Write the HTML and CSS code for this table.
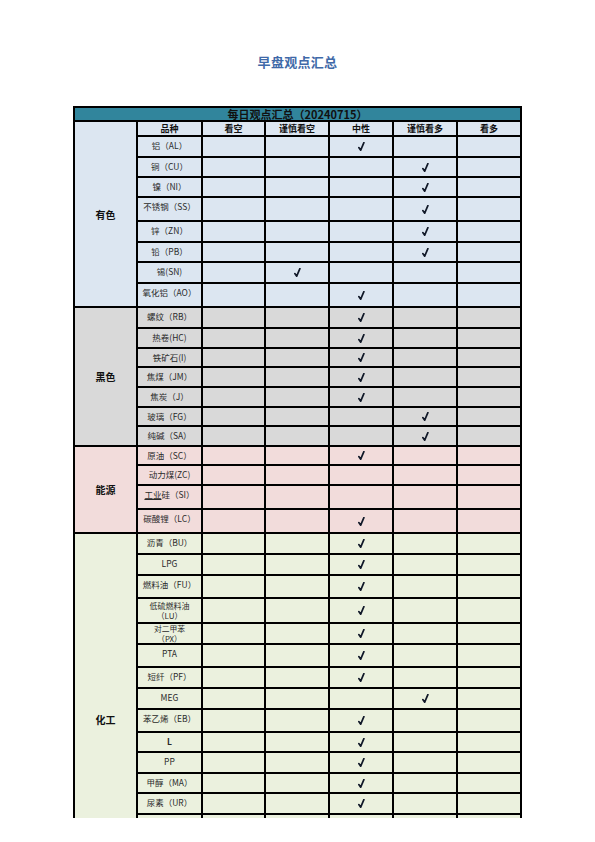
FILE: index.html
```html
<!DOCTYPE html>
<html lang="zh-CN">
<head>
<meta charset="utf-8">
<title>早盘观点汇总</title>
<link rel="stylesheet" href="styles.css">
</head>
<body>
<div class="page">
  <h1 class="title">早盘观点汇总</h1>
  <div class="clip">
    <div class="sheet">
      <div class="banner">每日观点汇总（20240715）</div>

      <div class="cat ys span-ys">有色</div>
      <div class="row ys head">
        <div>品种</div><div>看空</div><div>谨慎看空</div><div>中性</div><div>谨慎看多</div><div>看多</div>
      </div>
      <div class="row ys"><div class="name">铝（AL）</div><div></div><div></div><div><svg class="chk" viewBox="0 0 7 9"><path d="M0.8 5.6 L2.7 8.2 L5.9 0.6"/></svg></div><div></div><div></div></div>
      <div class="row ys"><div class="name">铜（CU）</div><div></div><div></div><div></div><div><svg class="chk" viewBox="0 0 7 9"><path d="M0.8 5.6 L2.7 8.2 L5.9 0.6"/></svg></div><div></div></div>
      <div class="row ys"><div class="name">镍（NI）</div><div></div><div></div><div></div><div><svg class="chk" viewBox="0 0 7 9"><path d="M0.8 5.6 L2.7 8.2 L5.9 0.6"/></svg></div><div></div></div>
      <div class="row ys"><div class="name">不锈钢（SS）</div><div></div><div></div><div></div><div><svg class="chk" viewBox="0 0 7 9"><path d="M0.8 5.6 L2.7 8.2 L5.9 0.6"/></svg></div><div></div></div>
      <div class="row ys"><div class="name">锌（ZN）</div><div></div><div></div><div></div><div><svg class="chk" viewBox="0 0 7 9"><path d="M0.8 5.6 L2.7 8.2 L5.9 0.6"/></svg></div><div></div></div>
      <div class="row ys"><div class="name">铅（PB）</div><div></div><div></div><div></div><div><svg class="chk" viewBox="0 0 7 9"><path d="M0.8 5.6 L2.7 8.2 L5.9 0.6"/></svg></div><div></div></div>
      <div class="row ys"><div class="name">锡(SN)</div><div></div><div><svg class="chk" viewBox="0 0 7 9"><path d="M0.8 5.6 L2.7 8.2 L5.9 0.6"/></svg></div><div></div><div></div><div></div></div>
      <div class="row ys"><div class="name">氧化铝（AO）</div><div></div><div></div><div><svg class="chk" viewBox="0 0 7 9"><path d="M0.8 5.6 L2.7 8.2 L5.9 0.6"/></svg></div><div></div><div></div></div>

      <div class="cat hs span-hs">黑色</div>
      <div class="row hs"><div class="name">螺纹（RB）</div><div></div><div></div><div><svg class="chk" viewBox="0 0 7 9"><path d="M0.8 5.6 L2.7 8.2 L5.9 0.6"/></svg></div><div></div><div></div></div>
      <div class="row hs"><div class="name">热卷(HC)</div><div></div><div></div><div><svg class="chk" viewBox="0 0 7 9"><path d="M0.8 5.6 L2.7 8.2 L5.9 0.6"/></svg></div><div></div><div></div></div>
      <div class="row hs"><div class="name">铁矿石(I)</div><div></div><div></div><div><svg class="chk" viewBox="0 0 7 9"><path d="M0.8 5.6 L2.7 8.2 L5.9 0.6"/></svg></div><div></div><div></div></div>
      <div class="row hs"><div class="name">焦煤（JM）</div><div></div><div></div><div><svg class="chk" viewBox="0 0 7 9"><path d="M0.8 5.6 L2.7 8.2 L5.9 0.6"/></svg></div><div></div><div></div></div>
      <div class="row hs"><div class="name">焦炭（J）</div><div></div><div></div><div><svg class="chk" viewBox="0 0 7 9"><path d="M0.8 5.6 L2.7 8.2 L5.9 0.6"/></svg></div><div></div><div></div></div>
      <div class="row hs"><div class="name">玻璃（FG）</div><div></div><div></div><div></div><div><svg class="chk" viewBox="0 0 7 9"><path d="M0.8 5.6 L2.7 8.2 L5.9 0.6"/></svg></div><div></div></div>
      <div class="row hs"><div class="name">纯碱（SA）</div><div></div><div></div><div></div><div><svg class="chk" viewBox="0 0 7 9"><path d="M0.8 5.6 L2.7 8.2 L5.9 0.6"/></svg></div><div></div></div>

      <div class="cat ny span-ny">能源</div>
      <div class="row ny"><div class="name">原油（SC）</div><div></div><div></div><div><svg class="chk" viewBox="0 0 7 9"><path d="M0.8 5.6 L2.7 8.2 L5.9 0.6"/></svg></div><div></div><div></div></div>
      <div class="row ny"><div class="name">动力煤(ZC)</div><div></div><div></div><div></div><div></div><div></div></div>
      <div class="row ny"><div class="name"><span class="ul">工业</span>硅（SI）</div><div></div><div></div><div></div><div></div><div></div></div>
      <div class="row ny"><div class="name">碳酸锂（LC）</div><div></div><div></div><div><svg class="chk" viewBox="0 0 7 9"><path d="M0.8 5.6 L2.7 8.2 L5.9 0.6"/></svg></div><div></div><div></div></div>

      <div class="cat hg span-hg">化工</div>
      <div class="row hg"><div class="name">沥青（BU）</div><div></div><div></div><div><svg class="chk" viewBox="0 0 7 9"><path d="M0.8 5.6 L2.7 8.2 L5.9 0.6"/></svg></div><div></div><div></div></div>
      <div class="row hg"><div class="name">LPG</div><div></div><div></div><div><svg class="chk" viewBox="0 0 7 9"><path d="M0.8 5.6 L2.7 8.2 L5.9 0.6"/></svg></div><div></div><div></div></div>
      <div class="row hg"><div class="name">燃料油（FU）</div><div></div><div></div><div><svg class="chk" viewBox="0 0 7 9"><path d="M0.8 5.6 L2.7 8.2 L5.9 0.6"/></svg></div><div></div><div></div></div>
      <div class="row hg"><div class="name two">低硫燃料油<br>（LU）</div><div></div><div></div><div><svg class="chk" viewBox="0 0 7 9"><path d="M0.8 5.6 L2.7 8.2 L5.9 0.6"/></svg></div><div></div><div></div></div>
      <div class="row hg"><div class="name two tight">对二甲苯<br>（PX）</div><div></div><div></div><div><svg class="chk" viewBox="0 0 7 9"><path d="M0.8 5.6 L2.7 8.2 L5.9 0.6"/></svg></div><div></div><div></div></div>
      <div class="row hg"><div class="name">PTA</div><div></div><div></div><div><svg class="chk" viewBox="0 0 7 9"><path d="M0.8 5.6 L2.7 8.2 L5.9 0.6"/></svg></div><div></div><div></div></div>
      <div class="row hg"><div class="name">短纤（PF）</div><div></div><div></div><div><svg class="chk" viewBox="0 0 7 9"><path d="M0.8 5.6 L2.7 8.2 L5.9 0.6"/></svg></div><div></div><div></div></div>
      <div class="row hg"><div class="name">MEG</div><div></div><div></div><div></div><div><svg class="chk" viewBox="0 0 7 9"><path d="M0.8 5.6 L2.7 8.2 L5.9 0.6"/></svg></div><div></div></div>
      <div class="row hg"><div class="name">苯乙烯（EB）</div><div></div><div></div><div><svg class="chk" viewBox="0 0 7 9"><path d="M0.8 5.6 L2.7 8.2 L5.9 0.6"/></svg></div><div></div><div></div></div>
      <div class="row hg"><div class="name bold">L</div><div></div><div></div><div><svg class="chk" viewBox="0 0 7 9"><path d="M0.8 5.6 L2.7 8.2 L5.9 0.6"/></svg></div><div></div><div></div></div>
      <div class="row hg"><div class="name">PP</div><div></div><div></div><div><svg class="chk" viewBox="0 0 7 9"><path d="M0.8 5.6 L2.7 8.2 L5.9 0.6"/></svg></div><div></div><div></div></div>
      <div class="row hg"><div class="name">甲醇（MA）</div><div></div><div></div><div><svg class="chk" viewBox="0 0 7 9"><path d="M0.8 5.6 L2.7 8.2 L5.9 0.6"/></svg></div><div></div><div></div></div>
      <div class="row hg"><div class="name">尿素（UR）</div><div></div><div></div><div><svg class="chk" viewBox="0 0 7 9"><path d="M0.8 5.6 L2.7 8.2 L5.9 0.6"/></svg></div><div></div><div></div></div>
      <div class="row hg"><div class="name">PVC</div><div></div><div></div><div></div><div></div><div></div></div>
    </div>
  </div>
</div>
</body>
</html>
```

FILE: styles.css
```css
* {
  box-sizing: border-box;
  margin: 0;
  padding: 0;
}

body {
  background: #ffffff;
  font-family: "Noto Sans CJK SC", "Noto Sans", sans-serif;
  color: #1a1a1a;
}

.page {
  width: 595px;
  height: 842px;
  overflow: hidden;
  padding-top: 53px;
}

.title {
  font-size: 13px;
  line-height: 18px;
  font-weight: 700;
  color: #3f69a8;
  text-align: center;
  letter-spacing: 0.3px;
}

.clip {
  margin: 35px 0 0 73px;
  width: 449px;
  height: 712px;
  overflow: hidden;
}

.sheet {
  display: grid;
  grid-template-columns: 61px 63px 61px 62px 62px 62px 62px;
  grid-template-rows:
    12px 13px
    19px 18px 18px 22px 19px 18px 19px 22px
    19px 18px 17px 18px 18px 17px 18px
    17px 18px 22px 22px
    19px 19px 21px 23px 19px 21px 19px 19px 21px 18px 19px 18px 19px 19px
    21px 21px 22px;
  gap: 2px;
  padding: 2px;
  background: #000000;
}

.banner {
  grid-column: 1 / -1;
  background: #31859c;
  color: #111111;
  font-size: 11px;
  line-height: 12px;
  font-weight: 700;
  text-align: center;
}

.row {
  display: contents;
}

.row > div {
  display: flex;
  align-items: center;
  justify-content: center;
  overflow: hidden;
}

.row > .name {
  display: block;
  text-align: center;
  font-size: 8.5px;
  line-height: 10px;
  padding-top: 3px;
  color: #2a2a2a;
  white-space: nowrap;
}

.row > .name.two {
  font-size: 8px;
  line-height: 9.5px;
  padding-top: 2px;
}

.row > .name.tight {
  font-size: 7.8px;
  line-height: 9.5px;
  padding-top: 0;
}

.name.bold {
  font-weight: 700;
}

.ul {
  text-decoration: underline;
}

.head > div {
  font-size: 9px;
  line-height: 11px;
  font-weight: 700;
  color: #111111;
}

.cat {
  grid-column: 1;
  display: flex;
  align-items: center;
  justify-content: center;
  font-size: 10px;
  font-weight: 700;
  color: #111111;
}

.span-ys { grid-row: span 9; }
.span-hs { grid-row: span 7; }
.span-ny { grid-row: span 4; }
.span-hg { grid-row: span 17; }

.ys, .ys > div { background: #dce6f1; }
.hs, .hs > div { background: #d9d9d9; }
.ny, .ny > div { background: #f2dcdb; }
.hg, .hg > div { background: #ebf1de; }

.row.ys, .row.hs, .row.ny, .row.hg {
  background: none;
}

.chk {
  width: 7px;
  height: 9px;
  fill: none;
  stroke: #101828;
  stroke-width: 1.7;
  stroke-linecap: round;
  stroke-linejoin: round;
}
```
